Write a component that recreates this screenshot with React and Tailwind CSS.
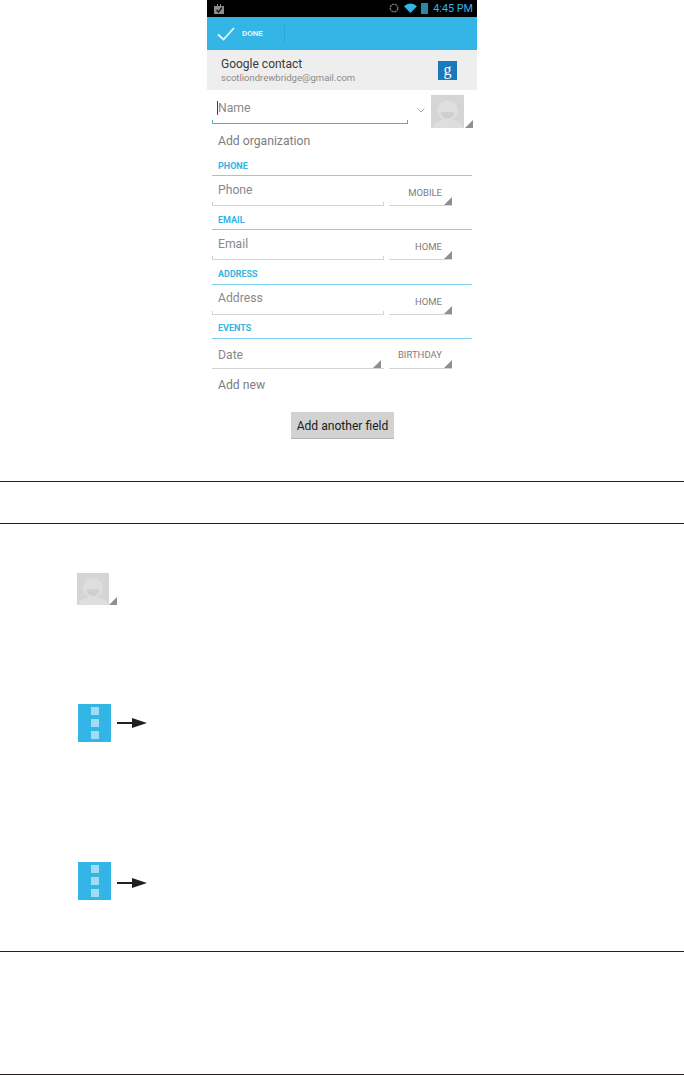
const roboto = "font-['Roboto','Liberation_Sans',sans-serif]";

const Corner = ({ className = "" }) => (
  <svg viewBox="0 0 8 8" className={`w-2 h-2 ${className}`}>
    <path d="M8 0V8H0Z" fill="#8f8f8f" />
  </svg>
);

const Avatar = ({ className = "" }) => (
  <svg viewBox="0 0 32 32" className={className}>
    <rect width="32" height="32" fill="#d5d5d5" />
    <circle cx="16" cy="15" r="10" fill="#dedede" />
    <path d="M9.5 16.5a6.5 6.5 0 0 0 13 0Z" fill="#cfcfcf" />
    <path d="M1 32c1-5 7-8 15-8s14 3 15 8Z" fill="#dedede" />
  </svg>
);

const MenuTile = ({ className = "", arrowClass = "" }) => (
  <div className={`flex items-center ${className}`}>
    <div className="w-[33px] h-[38px] bg-[#33b5e5] flex flex-col items-center justify-center gap-1">
      <div className="w-2 h-2 bg-[#9fdcf3]" />
      <div className="w-2 h-2 bg-[#9fdcf3]" />
      <div className="w-2 h-2 bg-[#9fdcf3]" />
    </div>
    <svg viewBox="0 0 30 12" className={`w-[30px] h-3 ml-1.5 ${arrowClass}`}>
      <path d="M0 5H15V7H0Z M15 1L30 6L15 11Z" fill="#231f20" />
    </svg>
  </div>
);

const Section = ({ label, gap = "mt-[4px]" }) => (
  <div className="px-[5px]">
    <div className="text-[9px] leading-none font-bold text-[#33b5e5] px-1.5 h-[10px] flex items-center">{label}</div>
    <div className={`${gap} w-[260px] h-px bg-[#7fd0ee]`} />
  </div>
);

// little end ticks of the holo text field underline
const Ticks = ({ color = "bg-[#d4d4d4]" }) => (
  <>
    <span className={`absolute left-0 bottom-0 w-px h-[3px] ${color}`} />
    <span className={`absolute right-0 bottom-0 w-px h-[3px] ${color}`} />
  </>
);

const FieldRow = ({ placeholder, type, dropdown, textPad = "pt-1.5", typeTop = "top-[12px]" }) => (
  <div className="flex pl-[5px] gap-[5px] h-[30px]">
    <div className={`w-[172px] relative border-b border-[#d4d4d4] pl-1.5 ${textPad} text-[12.2px] leading-4 text-[#8a8a8a]`}>
      {placeholder}
      {dropdown ? <Corner className="absolute right-0 bottom-0 translate-x-[-3px]" /> : <Ticks />}
    </div>
    <div className="w-[63px] border-b border-[#d4d4d4] flex items-end justify-end relative">
      <span className={`text-[9.5px] leading-none text-[#7d7d7d] absolute right-[10px] ${typeTop}`}>{type}</span>
      <Corner />
    </div>
  </div>
);

const Rule = ({ className = "" }) => <div className={`h-px w-full bg-[#231f20] ${className}`} />;

export default function App() {
  return (
    <div className={`w-[684px] h-[1075px] bg-white overflow-hidden ${roboto}`}>
      <div className="w-[270px] ml-[207px]">
        <div className="h-[17px] bg-black flex items-center justify-between pl-[7px] pr-1">
          <svg viewBox="0 0 10 10" className="w-[10px] h-[10px]">
            <path d="M0 2H10V10H0Z M3 0H4V2H3Z M6 0H7V2H6Z" fill="#8c8c8c" />
            <path d="M2.5 6L4.5 8L8 3.5" stroke="#111" strokeWidth="1.3" fill="none" />
          </svg>
          <div className="flex items-center">
            <svg viewBox="0 0 10 10" className="w-[10px] h-[10px]">
              <circle cx="5" cy="5" r="3.8" stroke="#6e6e6e" strokeWidth="1.5" strokeDasharray="2.4 0.7" fill="none" />
            </svg>
            <svg viewBox="0 0 13 10" className="w-[13px] h-[10px] ml-[5px]">
              <path d="M0 3.2A9.2 9.2 0 0 1 13 3.2L6.5 10Z" fill="#33b5e5" />
            </svg>
            <div className="w-[7px] h-[11px] bg-[#2a87a8] ml-1" />
            <span className="text-[10.8px] leading-none text-[#33b5e5] ml-[5px] mt-px">4:45 PM</span>
          </div>
        </div>
        <div className="h-[33px] bg-[#33b5e5] flex items-center pl-[10px]">
          <svg viewBox="0 0 18 14" className="w-[18px] h-[14px]">
            <path d="M1 7.5L6.5 12.5L17 1" stroke="#e8f7fc" strokeWidth="1.8" fill="none" />
          </svg>
          <span className="ml-[7px] text-[8px] font-bold text-[#e3f5fb] leading-none">DONE</span>
          <div className="ml-[21px] w-px h-[17px] bg-[#2ea6d2]" />
        </div>
        <div className="h-[40px] bg-[#eeeeee] flex items-center justify-between pl-[14px] pr-[20px]">
          <div>
            <div className="text-[12px] leading-[14px] text-[#3a3a3a]">Google contact</div>
            <div className="text-[9.5px] leading-[12px] mt-px text-[#8a8a8a]">scotliondrewbridge@gmail.com</div>
          </div>
          <div className="w-[19px] h-[19px] bg-[#1b78bd] text-white flex items-center justify-center text-[16px] leading-none font-['Liberation_Serif',serif]">g</div>
        </div>

        <div className="flex h-[38px] pl-[5px]">
          <div className="relative w-[196px] h-[34px] border-b-[1.5px] border-[#4fb0c9] pl-[5px] pt-[2px] text-[12.2px] leading-4 text-[#8a8a8a] flex items-center">
            <div className="w-px h-[14px] bg-[#444]" />
            Name
            <Ticks color="bg-[#4fb0c9]" />
          </div>
          <svg viewBox="0 0 8 5" className="w-2 h-[5px] ml-[9px] mt-[18px]">
            <path d="M.5 .5L4 4L7.5 .5" stroke="#a5a5a5" fill="none" />
          </svg>
          <div className="relative ml-[6px] mt-[5px] w-[42px] h-[33px]">
            <Avatar className="w-[33px] h-[33px]" />
            <Corner className="absolute right-0 bottom-0" />
          </div>
        </div>

        <div className="h-[27px] pl-[11px] flex items-center text-[12.2px] text-[#7d7d7d]">Add organization</div>
        <div className="pt-[6px]" />
        <Section label="PHONE" />
        <FieldRow placeholder="Phone" type="MOBILE" />
        <div className="pt-[9px]" />
        <Section label="EMAIL" />
        <FieldRow placeholder="Email" type="HOME" />
        <div className="pt-[9px]" />
        <Section label="ADDRESS" gap="mt-[5px]" />
        <FieldRow placeholder="Address" type="HOME" textPad="pt-[5px]" />
        <div className="pt-[8px]" />
        <Section label="EVENTS" gap="mt-[5px]" />
        <FieldRow placeholder="Date" type="BIRTHDAY" dropdown textPad="pt-2" typeTop="top-[11px]" />
        <div className="h-[32px] pl-[11px] flex items-center text-[12.2px] text-[#7d7d7d]">Add new</div>
        <div className="mt-[11px] ml-[84px] w-[103px] h-[27px] pt-[2px] bg-[#d2d2d2] border-b border-[#b5b5b5] flex items-center justify-center text-[12.1px] text-[#1c1c1c]">
          Add another field
        </div>
      </div>

      <Rule className="mt-[42px]" />
      <Rule className="mt-[41px]" />

      <div className="relative ml-[77px] mt-[49px] w-[40px] h-[32px]">
        <Avatar className="w-[32px] h-[32px]" />
        <Corner className="absolute right-0 bottom-0" />
      </div>
      <MenuTile className="ml-[78px] mt-[99px]" />
      <MenuTile className="ml-[78px] mt-[120px]" arrowClass="translate-y-[2px]" />

      <Rule className="mt-[51px]" />
      <Rule className="mt-[122px]" />
    </div>
  );
}
